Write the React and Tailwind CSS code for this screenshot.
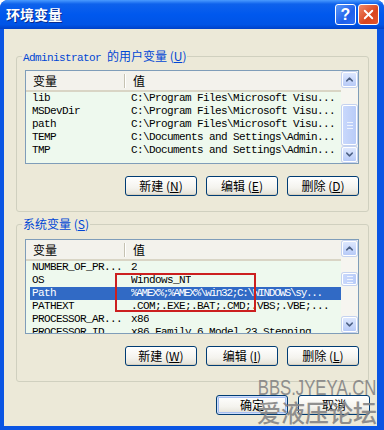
import { ChevronUp, ChevronDown, X } from 'lucide-react';

const cjk = "font-['Noto_Sans_CJK_SC',sans-serif]";
const mono = "font-['Liberation_Mono','Noto_Sans_CJK_SC',monospace] text-[11px] tracking-[-0.6px]";

const userVars = [
    ['lib', 'C:\\Program Files\\Microsoft Visu...'],
    ['MSDevDir', 'C:\\Program Files\\Microsoft Visu...'],
    ['path', 'C:\\Program Files\\Microsoft Visu...'],
    ['TEMP', 'C:\\Documents and Settings\\Admin...'],
    ['TMP', 'C:\\Documents and Settings\\Admin...'],
];

const systemVars = [
    ['NUMBER_OF_PR...', '2'],
    ['OS', 'Windows_NT'],
    ['Path', '%AMEX%;%AMEX%\\win32;C:\\WINDOWS\\sy...'],
    ['PATHEXT', '.COM;.EXE;.BAT;.CMD;.VBS;.VBE;...'],
    ['PROCESSOR_AR...', 'x86'],
    ['PROCESSOR_ID...', 'x86 Family 6 Model 23 Stepping ...'],
];

function ScrollButton({ up }) {
    const Icon = up ? ChevronUp : ChevronDown;
    return (
        <div className="flex h-[15px] w-[15px] items-center justify-center rounded-[2px] border border-white bg-[linear-gradient(to_bottom,#DDE7FE,#B7CAF7)] shadow-[0_0_0_1px_#C4D2F0]">
            <Icon size={11} strokeWidth={3.2} className="text-[#4D6185]" />
        </div>
    );
}

function ScrollBar({ thumbClass }) {
    return (
        <div className="flex w-[17px] flex-col items-center bg-[#F6F5F0] py-[1px]">
            <ScrollButton up />
            <div className={`flex w-[15px] flex-col items-center justify-center gap-[2px] rounded-[2px] border border-white bg-[linear-gradient(to_right,#C9D8FC,#B9CCF8)] shadow-[0_0_0_1px_#C4D2F0] ${thumbClass}`}>
                <div className="h-[1px] w-[6px] bg-[#EEF3FE]" />
                <div className="h-[1px] w-[6px] bg-[#EEF3FE]" />
                <div className="h-[1px] w-[6px] bg-[#EEF3FE]" />
            </div>
            <div className="flex-1" />
            <ScrollButton />
        </div>
    );
}

function ListView({ rows, selected, heightClass, thumbClass }) {
    return (
        <div className={`flex overflow-hidden border border-[#7F9DB9] bg-[#EEF9EE] ${heightClass}`}>
            <div className="flex min-w-0 flex-1 flex-col">
                <div className={`flex h-[21px] shrink-0 items-center border-b-2 border-[#D9D5C5] bg-[#F3F2EC] text-[12px] text-black ${cjk}`}>
                    <div className="w-[98px] pl-[7px]">变量</div>
                    <div className="h-[14px] w-[1px] bg-[#C5C2B2]" />
                    <div className="h-[14px] w-[1px] bg-white" />
                    <div className="pl-[7px]">值</div>
                </div>
                {rows.map(([name, value], i) => (
                    <div
                        key={name}
                        className={`ml-[4px] flex h-[13px] shrink-0 items-center whitespace-nowrap leading-[13px] ${mono} ${i === selected ? 'bg-[#316AC5] text-white' : 'text-black'}`}
                    >
                        <div className="w-[101px] shrink-0 pl-[2px]">{name}</div>
                        <div className={`overflow-hidden ${i === selected ? 'tracking-[-1.3px]' : ''}`}>{value}</div>
                    </div>
                ))}
            </div>
            <ScrollBar thumbClass={thumbClass} />
        </div>
    );
}

function Button({ children, isDefault }) {
    return (
        <div
            className={`flex h-[20px] w-[72px] items-center justify-center rounded-[3px] border border-[#003C74] bg-[linear-gradient(to_bottom,#FFFFFF,#F4F3EE_60%,#E3E0D5)] text-[12px] text-black ${cjk} ${isDefault ? 'shadow-[inset_0_0_0_1px_#CEDDF9,inset_0_0_0_2px_#A6BEF0]' : 'shadow-[inset_0_-1px_0_#D6D0C0]'}`}
        >
            {children}
        </div>
    );
}

function Legend({ children }) {
    return (
        <legend className="-ml-[3px] h-[14px] px-[1px] text-[12px] leading-[14px] text-[#0046D5]">
            {children}
        </legend>
    );
}

export default function App() {
    return (
        <div className="relative h-[430px] w-[384px] overflow-hidden bg-white">
            <div className="flex h-full flex-col rounded-t-[8px] bg-[#0A55E3]">
                <div className="flex h-[29px] shrink-0 items-center rounded-t-[8px] bg-[linear-gradient(to_bottom,#4A9BFF_0%,#0E62EC_14%,#0058EE_50%,#0054E6_85%,#0041C8_100%)] pl-[6px] pr-[5px]">
                    <div className={`flex-1 text-[14px] font-bold text-white [text-shadow:1px_1px_#0A2A8E] ${cjk}`}>环境变量</div>
                    <div className="flex gap-[2px]">
                        <div className="flex h-[21px] w-[21px] items-center justify-center rounded-[3px] border border-white bg-[linear-gradient(135deg,#5C98F8,#1E5FEB_60%,#2D6DF2)] font-['Liberation_Sans',sans-serif] text-[16px] font-bold leading-none text-white">?</div>
                        <div className="flex h-[21px] w-[21px] items-center justify-center rounded-[3px] border border-white bg-[linear-gradient(135deg,#F08A6A,#D9451E_60%,#E3552C)]">
                            <X size={15} strokeWidth={3} className="text-white" />
                        </div>
                    </div>
                </div>

                <div className="mb-[4px] ml-[4px] mr-[7px] flex flex-1 flex-col bg-[#ECE9D8]">
                    <fieldset className="ml-[12px] mr-[8px] mt-[20px] rounded-[3px] border border-[#D0D0BF] pb-[15px] pl-[8px] pr-[9px]">
                        <Legend>
                            <span className={mono}>Administrator </span>
                            <span className={cjk}>的用户变量 (<u>U</u>)</span>
                        </Legend>
                        <div className="mt-[7px]">
                            <ListView rows={userVars} selected={-1} heightClass="h-[94px]" thumbClass="mt-[18px] h-[40px]" />
                        </div>
                        <div className="mt-[12px] flex justify-end gap-[9px]">
                            <Button>新建 (<u>N</u>)</Button>
                            <Button>编辑 (<u>E</u>)</Button>
                            <Button>删除 (<u>D</u>)</Button>
                        </div>
                    </fieldset>

                    <fieldset className="ml-[12px] mr-[8px] mt-[5px] rounded-[3px] border border-[#D0D0BF] pb-[15px] pl-[8px] pr-[9px]">
                        <Legend>
                            <span className={cjk}>系统变量 (<u>S</u>)</span>
                        </Legend>
                        <div className="mt-[8px]">
                            <ListView rows={systemVars} selected={2} heightClass="h-[95px]" thumbClass="mt-[17px] h-[12px]" />
                        </div>
                        <div className="mt-[12px] flex justify-end gap-[9px]">
                            <Button>新建 (<u>W</u>)</Button>
                            <Button>编辑 (<u>I</u>)</Button>
                            <Button>删除 (<u>L</u>)</Button>
                        </div>
                    </fieldset>

                    <div className="mr-[7px] mt-[13px] flex justify-end gap-[10px]">
                        <Button isDefault>确定</Button>
                        <Button>取消</Button>
                    </div>
                </div>
            </div>

            {/* annotation box drawn over the system list */}
            <div className="absolute left-[115px] top-[273px] h-[39px] w-[141px] border-2 border-[#CC1F1F]" />

            {/* forum watermark */}
            <div className="pointer-events-none absolute left-[256px] top-[376px] flex w-[122px] flex-col items-center text-[#858585] opacity-90">
                <div className="origin-center scale-x-[0.76] font-['Liberation_Sans',sans-serif] text-[22px] leading-[23px]">BBS.JYEYA.CN</div>
                <div className={`text-[24px] font-medium leading-[26px] ${cjk}`}>爱液压论坛</div>
            </div>
        </div>
    );
}
